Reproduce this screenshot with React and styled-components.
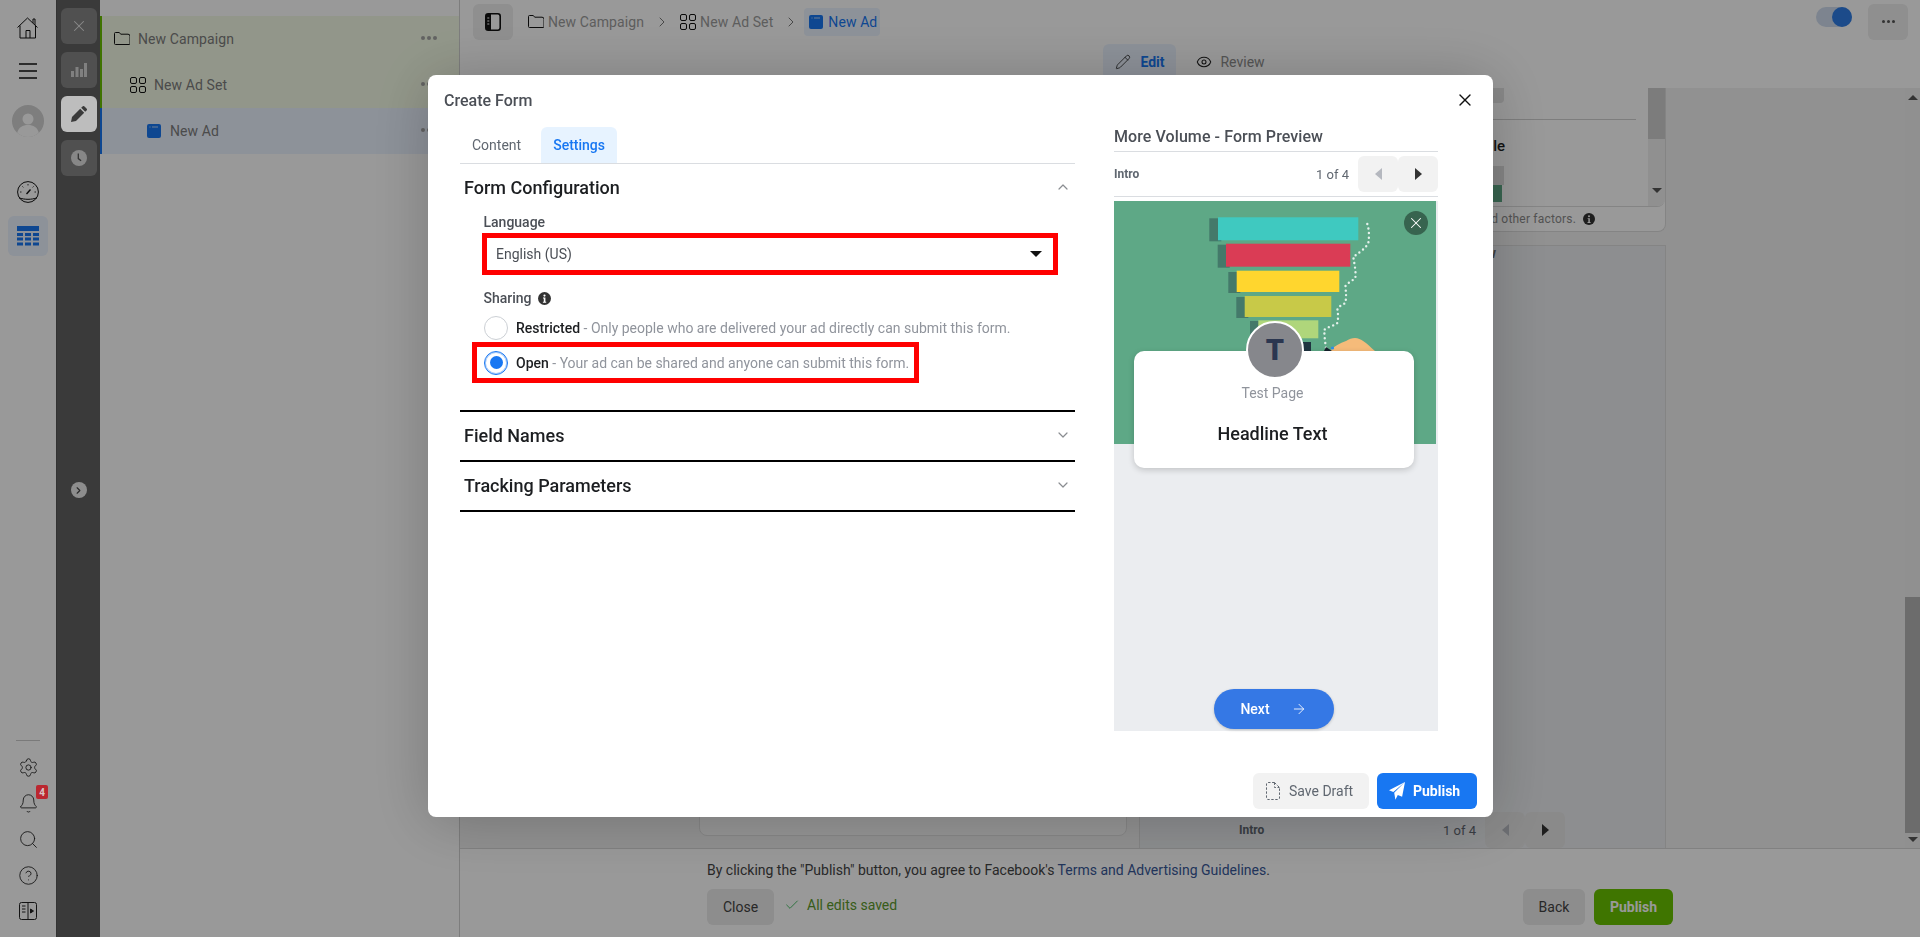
import React from "react";
import styled, { createGlobalStyle } from "styled-components";
import { Settings, Bell, Search, CircleHelp, X, ChevronDown, ChevronUp, ChevronRight, Pencil, Eye, ArrowRight, Check } from "lucide-react";

const Global = createGlobalStyle`
  html, body { margin: 0; padding: 0; height: 100%; overflow: hidden; background: #fff; }
  body { font-family: Roboto, "Liberation Sans", sans-serif; font-size: 14px; color: #1c1e21; }
  * { box-sizing: border-box; }
  #root { height: 100%; }
`;

const Shell = styled.div`display: flex; width: 1920px; height: 937px; overflow: hidden;`;

/* Left rail */
const Rail = styled.nav`
  width: 56px; flex: none; display: flex; flex-direction: column; align-items: center; background: #fff; padding: 17px 0 8px;
`;
const RailIcon = styled.div`
  width: 40px; height: ${p => p.$h || 36}px; margin-top: ${p => p.$mt || 0}px; display: flex; align-items: center; justify-content: center;
  border-radius: 6px; flex: none; position: relative; color: #111;
  background: ${p => (p.$active ? "#ebf3ff" : "transparent")};
`;
const RailSpacer = styled.div`flex: 1;`;
const RailRule = styled.div`width: 24px; height: 1px; background: #ccc; margin-bottom: 8px;`;
const Badge = styled.span`
  position: absolute; top: 0; right: 0; width: 12px; height: 14px; border-radius: 2px; background: #bb2730; color: #d8c4c6;
  font-size: 10px; font-weight: 700; display: flex; align-items: center; justify-content: center; z-index: 11;
`;
const AvatarWrap = styled.div`width: 32px; height: 32px; border-radius: 50%; overflow: hidden; margin-top: 22px; flex: none;`;

/* Dark rail */
const DarkRail = styled.div`
  width: 44px; flex: none; background: #616161; border-left: 1px solid #555; display: flex; flex-direction: column; align-items: center; padding-top: 8px; gap: 8px;
`;
const DarkBtn = styled.button`
  width: 36px; height: 36px; border: 0; border-radius: 6px; padding: 0; display: flex; align-items: center; justify-content: center; flex: none;
  background: ${p => (p.$active ? "#bdbdbd" : "#858585")}; color: ${p => (p.$active ? "#3a3a3a" : "#e6e6e6")};
  ${p => p.$active ? "position: relative; z-index: 11;" : ""}
`;
const Expander = styled.div`
  margin-top: 298px; width: 16px; height: 16px; border-radius: 50%; background: #ececec; color: #444; display: flex; align-items: center; justify-content: center;
`;

/* Tree */
const Tree = styled.aside`width: 360px; flex: none; border-right: 1px solid #d0d0d0; padding-top: 16px; background: #fff;`;
const TreeRow = styled.div`
  height: 46px; display: flex; align-items: center; padding-left: ${p => p.$indent}px; padding-right: 22px; gap: 8px;
  background: ${p => p.$tone === "blue" ? "#ebf3ff" : "#f4fbe6"};
  border-left: 2px solid ${p => p.$tone === "blue" ? "#1877f2" : "#69c000"};
  color: #7d7d7d; font-size: 14px; letter-spacing: .1px;
`;
const RowText = styled.span`flex: 1; margin-left: ${p => p.$ml || 0}px;`;
const Dots = styled.span`
  display: flex; gap: 2px; margin-top: -2px;
  & i { width: ${p => p.$s || 4}px; height: ${p => p.$s || 4}px; border-radius: 50%; background: ${p => p.$c || "#a4a4a4"}; display: block; }
`;

/* Main */
const Main = styled.main`flex: 1; min-width: 0; display: flex; flex-direction: column;`;
const Header = styled.header`height: 88px; flex: none; background: #fff; display: flex; flex-direction: column;`;
const TopBar = styled.div`height: 44px; display: flex; align-items: flex-start; padding: 4px 12px 0 13px;`;
const SquareBtn = styled.button`
  width: 40px; height: 36px; border: 0; border-radius: 6px; background: #eeeeee; padding: 0; display: flex; align-items: center; justify-content: center; flex: none; color: #222;
`;
const Crumbs = styled.div`display: flex; align-items: center; height: 28px; margin: 4px 0 0 15px; color: #9c9c9c; font-size: 14px; letter-spacing: .1px;`;
const Crumb = styled.span`display: flex; align-items: center; gap: 4px;`;
const CrumbSep = styled.span`display: flex; margin: 0 ${p => p.$r}px 0 10px; color: #6e6e6e;`;
const CrumbActive = styled.span`
  display: flex; align-items: center; gap: 5px; height: 28px; width: 76px; padding: 0 0 0 5px; border-radius: 4px; background: #ebf3ff; color: #1877f2;
`;
const TopSpacer = styled.div`flex: 1;`;
const Toggle = styled.div`width: 36px; height: 20px; border-radius: 10px; background: #d0dcee; margin: 3px 16px 0 0; display: flex; justify-content: flex-end;`;
const ToggleKnob = styled.div`width: 20px; height: 20px; border-radius: 50%; background: #2f7ee6;`;
const ViewTabs = styled.div`display: flex; justify-content: center; gap: 8px; height: 36px;`;
const ViewTab = styled.div`
  display: flex; align-items: center; gap: ${p => p.$active ? 9 : 8}px; padding: 0 12px; border-radius: 6px; font-size: 14px;
  background: ${p => p.$active ? "#ebf3ff" : "transparent"};
  color: ${p => p.$active ? "#1877f2" : "#8d8d8d"}; font-weight: ${p => p.$active ? 700 : 400};
`;

const Content = styled.div`flex: 1; min-height: 0; display: flex; background: #f2f2f2;`;
const EditorCol = styled.div`width: 679px; flex: none; padding: 0 12px 12px 239px; display: flex; align-items: flex-end;`;
const EditorCard = styled.div`width: 428px; height: 300px; background: #fafafa; border: 1px solid #e0e0e0; border-radius: 8px;`;
const PreviewCol = styled.div`width: 527px; flex: none; display: flex; flex-direction: column; gap: 13px;`;
const TopCard = styled.section`height: 144px; flex: none; background: #fff; border: solid #dcdcdc; border-width: 0 1px 1px 1px; border-radius: 0 0 8px 8px; display: flex; flex-direction: column;`;
const TopPane = styled.div`height: 119px; flex: none; display: flex; border-bottom: 1px solid #ddd; border-radius: 0 0 8px 8px; overflow: hidden;`;
const TopPaneBody = styled.div`flex: 1; min-width: 0; display: flex; flex-direction: column; align-items: flex-start;`;
const MiniChip = styled.div`width: ${p => p.$w}px; height: ${p => p.$h}px; margin-left: 139px; background: ${p => p.$c}; border-radius: ${p => p.$r || 0};`;
const PaneRule = styled.div`width: 496px; height: 1px; background: #d0d0d0; margin: 16px 0 0 0;`;
const PaneTitle = styled.div`width: 226px; margin: 16px 0 10px 139px; text-align: right; font-size: 15px; font-weight: 500; color: #1c1e21; line-height: 20px;`;
const Scrollbar = styled.div`width: ${p => p.$w}px; flex: none; background: #f1f1f1; display: flex; flex-direction: column; align-items: center;`;
const Thumb = styled.div`width: 100%; height: ${p => p.$h}px; background: ${p => p.$c || "#cfcfcf"};`;
const BarGap = styled.div`flex: 1;`;
const ArrowDown = styled.div`width: 0; height: 0; border: 5px solid transparent; border-bottom: 0; border-top: 5px solid #555; margin: ${p => p.$m || "0 0 12px"};`;
const ArrowUp = styled.div`width: 0; height: 0; border: 5px solid transparent; border-top: 0; border-bottom: 5px solid #555; margin: ${p => p.$m || "0"};`;
const Estimate = styled.div`flex: 1; display: flex; align-items: center; justify-content: flex-end; padding-right: 70px; gap: 7px; white-space: nowrap; font-size: 12px; letter-spacing: .2px; overflow: hidden; color: #8a8a8a;`;
const PreviewCard = styled.section`flex: 1; min-height: 0; background: #ebedf0; border: 1px solid #dcdcdc; border-bottom: 0; display: flex; flex-direction: column;`;
const PreviewHeading = styled.div`padding-left: 306px; font-size: 14px; font-weight: 700; color: #6b6b6b; line-height: 14px;`;
const CardSpacer = styled.div`flex: 1;`;
const PagerStrip = styled.div`display: flex; align-items: center; height: 36px; padding: 0 100px 0 99px;`;
const IntroLabel = styled.span`font-size: 12px; font-weight: 700; color: #606770; line-height: 16px;`;
const PageCount = styled.span`margin-left: auto; margin-right: 9px; font-size: 13px; color: #606770;`;
const PagerBtn = styled.button`
  width: 40px; height: 36px; border: 0; padding: 0; background: ${p => p.$bg || "#f2f2f2"}; border-radius: 6px; display: flex; align-items: center; justify-content: center; flex: none;
`;
const CaretTri = styled.span`
  width: 0; height: 0; border-top: 6px solid transparent; border-bottom: 6px solid transparent;
  ${p => p.$dir === "left" ? `border-right: 7px solid ${p.$c};` : `border-left: 7px solid ${p.$c};`}
`;
const GreySide = styled.div`flex: 1; min-width: 0;`;

const Footer = styled.footer`height: 89px; flex: none; background: #fff; border-top: 1px solid #d8d8d8; padding: 12px 247px 0; display: flex; flex-direction: column;`;
const Terms = styled.div`font-size: 14px; line-height: 18px; color: #444; white-space: nowrap;`;
const TermsLink = styled.span`color: #385898;`;
const FooterRow = styled.div`display: flex; align-items: center; margin-top: 10px;`;
const FooterBtn = styled.button`
  height: 36px; padding: 0; border: 0; border-radius: 6px; font: ${p => p.$bold ? 700 : 400} 14px Roboto, sans-serif; margin-left: ${p => p.$ml || 0}px;
  background: ${p => p.$bg || "#ebebeb"}; color: ${p => p.$fg || "#444"}; width: ${p => p.$w}px;
`;
const Saved = styled.span`display: flex; align-items: center; gap: 7px; margin-left: 10px; color: #5c9a2c; font-size: 14px; margin-top: -4px;`;
const FooterSpacer = styled.div`flex: 1;`;

/* Modal */
const Overlay = styled.div`position: fixed; inset: 0; z-index: 10; background: rgba(0,0,0,.4); padding: 75px 0 0 428px;`;
const Modal = styled.div`
  width: 1065px; height: 742px; background: #fff; border-radius: 8px; box-shadow: 0 4px 60px rgba(0,0,0,.22); display: flex; flex-direction: column; position: relative;
`;
const ModalHead = styled.div`height: 52px; flex: none; display: flex; align-items: center; padding: 0 16px; justify-content: space-between;`;
const ModalTitle = styled.h2`margin: 0; font-size: 16px; font-weight: 500; color: #4b4f56; line-height: 20px;`;
const CloseBtn = styled.button`background: none; border: 0; padding: 0; margin: -2px 2px 0 0; display: flex; color: #111;`;
const ModalBody = styled.div`flex: 1; min-height: 0; display: flex; padding-left: 32px; gap: 39px;`;
const LeftCol = styled.div`width: 615px; flex: none;`;
const Tabs = styled.div`display: flex; gap: 8px; height: 37px; border-bottom: 1px solid #dadde1;`;
const Tab = styled.div`
  height: 36px; padding: 0 12px; border-radius: 6px 6px 0 0; display: flex; align-items: center; font-size: 14px; font-weight: ${p => p.$active ? 500 : 400};
  background: ${p => p.$active ? "#e7f3ff" : "transparent"}; color: ${p => p.$active ? "#1877f2" : "#606770"};
`;
const Section = styled.div`border-bottom: ${p => p.$last ? "2px solid #000" : "0"}; border-top: ${p => p.$top ? "2px solid #000" : "0"};`;
const SectionHead = styled.div`height: 48px; padding: 0 4px 2px; display: flex; align-items: center; justify-content: space-between; font-size: 18px; font-weight: 500; color: #1c1e21;`;
const Chevron = styled.span`display: flex; color: #8a8d91;`;
const SectionBody = styled.div`padding-bottom: 27px;`;
const FieldLabel = styled.div`display: flex; align-items: center; gap: 6px; margin: ${p => p.$mt || 0}px 0 0 23.5px; font-size: 14px; font-weight: 500; color: #4b4f56; line-height: 20px;`;
const SelectBox = styled.div`
  margin: 1px 0 0 22px; width: 576px; height: 42px; border: 5px solid #f00; display: flex; align-items: center; justify-content: space-between; padding: 0 11px 0 9px; font-size: 14px; color: #4b4f56;
`;
const SelectCaret = styled.span`width: 0; height: 0; border: 6px solid transparent; border-top: 6px solid #111; border-bottom: 0;`;
const RadioRow = styled.div`display: flex; align-items: center; gap: 8px; height: 24px; margin: 8px 0 2px 24px; font-size: 14px; color: #90949c; white-space: nowrap;`;
const RadioRowFramed = styled.div`
  display: flex; align-items: center; gap: 8px; width: 447px; height: 41px; margin-left: 12px; border: 5px solid #f00; padding-left: 7px; font-size: 14px; color: #90949c; white-space: nowrap;
`;
const Radio = styled.span`
  width: 24px; height: 24px; border-radius: 50%; flex: none; display: flex; align-items: center; justify-content: center; background: #fff;
  border: 1px solid ${p => p.$on ? "#1877f2" : "#ccd0d5"}; box-shadow: ${p => p.$on ? "inset 0 0 0 1px #a9ccf9" : "none"};
  &::after { content: ""; width: 13px; height: 13px; border-radius: 50%; background: ${p => p.$on ? "#1877f2" : "transparent"}; }
`;
const RadioName = styled.b`font-weight: 500; color: #1c1e21;`;

const RightCol = styled.div`width: 324px; flex: none; display: flex; flex-direction: column;`;
const PreviewTitle = styled.div`height: 25px; line-height: 20px; border-bottom: 1px solid #dadde1; font-size: 16px; letter-spacing: .08px; font-weight: 500; color: #4b4f56;`;
const PagerRow = styled.div`height: 45px; flex: none; border-bottom: 1px solid #dadde1; display: flex; align-items: center;`;
const Phone = styled.div`margin-top: 4px; height: 530px; background: #ebedf0; display: flex; flex-direction: column; align-items: flex-start; position: relative;`;
const Artwork = styled.svg`position: absolute; left: 0; top: 0; display: block;`;
const ImgClose = styled.span`
  position: absolute; top: 10px; right: 10px; width: 24px; height: 24px; border-radius: 50%; background: #37644f; color: #fff; display: flex; align-items: center; justify-content: center;
`;
const LeadCard = styled.div`
  position: relative; margin: 150px 0 0 20px; width: 280px; height: 117px; padding-right: 3px; background: #fff; border-radius: 10px; box-shadow: 0 2px 6px rgba(0,0,0,.18);
  display: flex; flex-direction: column; align-items: center;
`;
const PageAvatar = styled.div`
  position: absolute; left: 112px; top: -30px; width: 58px; height: 58px; border-radius: 50%; background: #86878c; border: 2px solid #fff; color: #2b3650;
  font-size: 29px; font-weight: 900; display: flex; align-items: center; justify-content: center;
`;
const PageName = styled.div`margin-top: 32px; font-size: 14px; color: #90949c; line-height: 20px;`;
const Headline = styled.div`margin-top: 21px; font-size: 18px; font-weight: 500; color: #1c1e21; line-height: 20px;`;
const NextBtn = styled.div`
  position: absolute; bottom: 2px; left: 100px; width: 120px; height: 40px; border-radius: 20px; background: #3578e5; color: #fff; font-weight: 500; font-size: 14px;
  display: flex; align-items: center; justify-content: center; gap: 21px; padding-right: 1px; box-shadow: 0 1px 3px rgba(0,0,0,.2);
`;
const ModalFoot = styled.div`height: 44px; flex: none; display: flex; justify-content: flex-end; gap: 8px; padding-right: 16px;`;
const DraftBtn = styled.button`
  width: 116px; height: 36px; border: 0; border-radius: 6px; background: #f2f2f2; color: #606770; font: 400 14px Roboto, sans-serif; display: flex; align-items: center; gap: 9px; padding: 0 0 0 13px;
`;
const SendBtn = styled.button`
  width: 100px; height: 36px; border: 0; border-radius: 6px; background: #1877f2; color: #fff; font: 700 14px Roboto, sans-serif; display: flex; align-items: center; gap: 8px; padding: 0 0 0 12px;
`;

/* drawn icons */
const FolderIcon = () => (
  <svg width="16" height="14" viewBox="0 0 16 14" fill="none" stroke="#111" strokeWidth="1"><path d="M.5 1.5a1 1 0 0 1 1-1h3.8l1.4 1.7h7.3a2 2 0 0 1 2 2v7.3a1 1 0 0 1-1 1H1.5a1 1 0 0 1-1-1z" /></svg>
);
const AdSetIcon = () => (
  <svg width="16" height="16" viewBox="0 0 16 16" fill="none" stroke="#111" strokeWidth="1">
    <rect x=".5" y=".5" width="6" height="6" rx="1.5" /><rect x="9.5" y=".5" width="6" height="6" rx="1.5" />
    <rect x=".5" y="9.5" width="6" height="6" rx="1.5" /><rect x="9.5" y="9.5" width="6" height="6" rx="1.5" />
  </svg>
);
const AdIcon = () => (
  <svg width="14" height="14" viewBox="0 0 14 14"><rect width="14" height="14" rx="2" fill="#1877f2" /><path d="M2.5 3h1M5 3h6" stroke="#fff" strokeWidth=".7" /></svg>
);
const HomeIcon = () => (
  <svg width="24" height="24" viewBox="0 0 24 24" fill="none" stroke="#111" strokeWidth="1"><path d="M1.5 11.5 11.5 2l10 9.5M4 9.5V22h15.5V9.5M10 22v-7.5h4V22M17 7V3h2v6" /></svg>
);
const MenuIcon = () => (
  <svg width="18" height="16" viewBox="0 0 18 16" stroke="#111" strokeWidth="1.6"><path d="M0 1h18M0 8h18M0 15h18" /></svg>
);
const AvatarIcon = () => (
  <svg width="32" height="32" viewBox="0 0 32 32"><rect width="32" height="32" fill="#d2d2d2" /><circle cx="16" cy="14" r="5.5" fill="#fff" /><path d="M5 29c1-7 6-9 11-9s10 2 11 9v3H5z" fill="#fff" /></svg>
);
const GaugeIcon = () => (
  <svg width="22" height="22" viewBox="0 0 22 22" fill="none" stroke="#111" strokeWidth="1">
    <circle cx="11" cy="11" r="10.4" /><path d="M2 16.8c5.5 2 12.5 2 18 0" /><path d="m9.5 13 4-4.5" strokeWidth="1.4" />
    <path d="M11 3.2v1.2M5.5 5.5l.8.8M3.2 11h1.2M16.5 5.5l-.8.8M18.8 11h-1.2" strokeWidth="1" />
  </svg>
);
const TableIcon = () => (
  <svg width="22" height="20" viewBox="0 0 22 20" fill="#1877f2">
    <rect width="22" height="5" />
    {[7, 11.5, 16.5].map(y => [0, 8, 16].map(x => <rect key={x + "-" + y} x={x} y={y} width="6" height="3" />))}
  </svg>
);
const PanelIcon = () => (
  <svg width="18" height="18" viewBox="0 0 18 18" fill="none" stroke="#222" strokeWidth="1"><rect x=".5" y=".5" width="17" height="17" rx="2" /><path d="M9 .5v17M3 4h3.5M3 7h3.5M3 10h3.5" /><path d="M11.5 7v4l3-2z" fill="#222" /></svg>
);
const BarsIcon = () => (
  <svg width="16" height="14" viewBox="0 0 16 14" fill="#d5d5d5"><rect x="0" y="8" width="3" height="6" /><rect x="4.5" y="4" width="3" height="10" /><rect x="9" y="6" width="3" height="8" /><rect x="13" y="0" width="3" height="14" /></svg>
);
const SolidPencil = () => (
  <svg width="16" height="16" viewBox="0 0 16 16" fill="#3a3a3a"><path d="M0 16l1-5 8.2-8.2 4 4L5 15zM10.2 1.8 11.5.5a1.4 1.4 0 0 1 2 0l2 2a1.4 1.4 0 0 1 0 2l-1.3 1.3z" /></svg>
);
const ClockIcon = () => (
  <svg width="16" height="16" viewBox="0 0 16 16"><circle cx="8" cy="8" r="8" fill="#e2e2e2" /><path d="M7.3 3.6v5l2.8 2.2" fill="none" stroke="#555" strokeWidth="1.3" /></svg>
);
const SidebarIcon = () => (
  <svg width="16" height="18" viewBox="0 0 16 18"><rect x=".8" y=".8" width="14.4" height="16.4" rx="2.4" fill="#fff" stroke="#111" strokeWidth="1.6" /><rect x="1" y="1" width="5" height="16" fill="#111" /><path d="M2.3 5h2M2.3 8h2M2.3 11h2" stroke="#fff" /></svg>
);
const FileDash = () => (
  <svg width="14" height="18" viewBox="0 0 14 18" fill="none" stroke="#606770" strokeWidth="1" strokeDasharray="2.4 1.6"><path d="M8.5.5H2a1.5 1.5 0 0 0-1.5 1.5v14A1.5 1.5 0 0 0 2 17.5h10a1.5 1.5 0 0 0 1.5-1.5V5.5z" /><path d="M8.5 .5v5h5" /></svg>
);
const SendIcon = () => (
  <svg width="16" height="18" viewBox="0 0 16 18" fill="#fff"><path d="M16 0 0 8.2l4.3 1.9zM16 0 5.2 10.8l1.2 7 2.4-4.7 4.3 1.6z" /></svg>
);
const InfoDot = ({ size = 13 }) => (
  <svg width={size} height={size} viewBox="0 0 13 13"><circle cx="6.5" cy="6.5" r="6.5" fill="#333" /><circle cx="6.5" cy="3.6" r="1.1" fill="#fff" /><path d="M5 5.6h2.4v4.2h.8v1H4.9v-1h.9V6.6H5z" fill="#fff" /></svg>
);
const FunnelArt = () => (
  <Artwork width="322" height="243" viewBox="0 0 322 243">
    <rect width="322" height="243" fill="#5ea886" />
    <g fill="#44796a">
      <rect x="95.3" y="17.3" width="12" height="23" /><rect x="103.7" y="43.7" width="12" height="23" /><rect x="114.3" y="71" width="12" height="21" /><rect x="122.3" y="96" width="12" height="21" /><rect x="136" y="120" width="12" height="18" />
    </g>
    <rect x="104" y="16.3" width="140.3" height="23" fill="#3fc9c0" />
    <rect x="112" y="42.7" width="124.3" height="23" fill="#da3c55" />
    <rect x="122.7" y="69.7" width="102.6" height="21.3" fill="#ffd62e" />
    <rect x="130.7" y="95" width="86.6" height="21" fill="#c8c948" />
    <rect x="144.3" y="119.3" width="60" height="18" fill="#afd67b" />
    <rect x="189" y="141" width="8" height="9" fill="#1f3440" />
    <path d="M253.3 23c2 6 2 13 1 19-3 6-10 10-15 14 1 7 3 15 2 21-3 3-10 6-10 9 1 6 1 11 0 16-3 2-7 3-8 7 1 4 1 9 0 13-3 3-11 4-13 7 0 6 1 14 2 20" fill="none" stroke="#e6f1ec" strokeWidth="2.4" strokeLinecap="round" strokeDasharray="0 4.6" />
    <path d="M216 150c4-5 10-8 16-10 3-2 6-3 9-3 6 0 11 5 20 13z" fill="#f5bb7a" />
    <path d="M212 146l6 4h-8z" fill="#14202a" /><circle cx="218.5" cy="147" r="1.6" fill="#2d8fe8" />
  </Artwork>
);

export default function App() {
  return (
    <>
      <Global />
      <Shell>
        <Rail>
          <RailIcon $h="22"><HomeIcon /></RailIcon>
          <RailIcon $mt="20" $h="24"><MenuIcon /></RailIcon>
          <AvatarWrap><AvatarIcon /></AvatarWrap>
          <RailIcon $mt="43" $h="24"><GaugeIcon /></RailIcon>
          <RailIcon $mt="12" $h="40" $active><TableIcon /></RailIcon>
          <RailSpacer />
          <RailRule />
          <RailIcon><Settings size={21} strokeWidth={1} color="#222" /></RailIcon>
          <RailIcon>
            <Bell size={21} strokeWidth={1} color="#222" />
            <Badge>4</Badge>
          </RailIcon>
          <RailIcon><Search size={21} strokeWidth={1} color="#222" /></RailIcon>
          <RailIcon><CircleHelp size={21} strokeWidth={1} color="#222" /></RailIcon>
          <RailIcon><PanelIcon /></RailIcon>
        </Rail>

        <DarkRail>
          <DarkBtn><X size={18} strokeWidth={1.4} /></DarkBtn>
          <DarkBtn><BarsIcon /></DarkBtn>
          <DarkBtn $active><SolidPencil /></DarkBtn>
          <DarkBtn><ClockIcon /></DarkBtn>
          <Expander><ChevronRight size={11} strokeWidth={2.5} /></Expander>
        </DarkRail>

        <Tree>
          <TreeRow $indent="12"><FolderIcon /><RowText>New Campaign</RowText><Dots><i /><i /><i /></Dots></TreeRow>
          <TreeRow $indent="28"><AdSetIcon /><RowText>New Ad Set</RowText><Dots><i /><i /><i /></Dots></TreeRow>
          <TreeRow $tone="blue" $indent="45"><AdIcon /><RowText $ml="1">New Ad</RowText><Dots><i /><i /><i /></Dots></TreeRow>
        </Tree>

        <Main>
          <Header>
            <TopBar>
              <SquareBtn><SidebarIcon /></SquareBtn>
              <Crumbs>
                <Crumb><FolderIcon />New Campaign</Crumb>
                <CrumbSep $r={10}><ChevronRight size={16} strokeWidth={1.4} /></CrumbSep>
                <Crumb><AdSetIcon />New Ad Set</Crumb>
                <CrumbSep $r={5}><ChevronRight size={16} strokeWidth={1.4} /></CrumbSep>
                <CrumbActive><AdIcon />New Ad</CrumbActive>
              </Crumbs>
              <TopSpacer />
              <Toggle><ToggleKnob /></Toggle>
              <SquareBtn><Dots $c="#555" $s={3}><i /><i /><i /></Dots></SquareBtn>
            </TopBar>
            <ViewTabs>
              <ViewTab $active><Pencil size={16} strokeWidth={1.2} color="#222" />Edit</ViewTab>
              <ViewTab><Eye size={16} strokeWidth={1.6} color="#222" />Review</ViewTab>
            </ViewTabs>
          </Header>

          <Content>
            <EditorCol><EditorCard /></EditorCol>
            <PreviewCol>
              <TopCard>
                <TopPane>
                  <TopPaneBody>
                    <MiniChip $w={225} $h={15} $c="#e4e4e4" $r="0 0 4px 0" />
                    <PaneRule />
                    <PaneTitle>Example</PaneTitle>
                    <MiniChip $w={225} $h={19} $c="#dedede" />
                    <MiniChip $w={223} $h={17} $c="#5ea886" />
                  </TopPaneBody>
                  <Scrollbar $w={17}>
                    <Thumb $h={51} />
                    <BarGap />
                    <ArrowDown $m="0 0 13px" />
                  </Scrollbar>
                </TopPane>
                <Estimate>Estimates may vary based on your budget and other factors.<InfoDot size={12} /></Estimate>
              </TopCard>
              <PreviewCard>
                <PreviewHeading>Preview</PreviewHeading>
                <CardSpacer />
                <PagerStrip>
                  <IntroLabel>Intro</IntroLabel>
                  <PageCount>1 of 4</PageCount>
                  <PagerBtn $bg="#e6e6e6"><CaretTri $dir="left" $c="#b5b8bf" /></PagerBtn>
                  <PagerBtn $bg="#e6e6e6"><CaretTri $c="#333" /></PagerBtn>
                </PagerStrip>
              </PreviewCard>
            </PreviewCol>
            <GreySide />
            <Scrollbar $w={15}>
              <ArrowUp $m="7px 0 0" />
              <BarGap />
              <Thumb $h={236} $c="#b5b5b5" />
              <ArrowDown $m="4px 0 6px" />
            </Scrollbar>
          </Content>

          <Footer>
            <Terms>By clicking the "Publish" button, you agree to Facebook's <TermsLink>Terms and Advertising Guidelines</TermsLink>.</Terms>
            <FooterRow>
              <FooterBtn $w={67}>Close</FooterBtn>
              <Saved><Check size={16} strokeWidth={1.4} color="#45bd62" />All edits saved</Saved>
              <FooterSpacer />
              <FooterBtn $w={62}>Back</FooterBtn>
              <FooterBtn $w={79} $ml={9} $bold $bg="#69c300" $fg="#fff">Publish</FooterBtn>
            </FooterRow>
          </Footer>
        </Main>
      </Shell>

      <Overlay>
        <Modal>
          <ModalHead>
            <ModalTitle>Create Form</ModalTitle>
            <CloseBtn><X size={20} strokeWidth={1.6} /></CloseBtn>
          </ModalHead>
          <ModalBody>
            <LeftCol>
              <Tabs>
                <Tab>Content</Tab>
                <Tab $active>Settings</Tab>
              </Tabs>
              <Section>
                <SectionHead>Form Configuration<Chevron><ChevronUp size={16} strokeWidth={1.8} /></Chevron></SectionHead>
                <SectionBody>
                  <FieldLabel>Language</FieldLabel>
                  <SelectBox>English (US)<SelectCaret /></SelectBox>
                  <FieldLabel $mt={13}>Sharing<InfoDot /></FieldLabel>
                  <RadioRow><Radio /><span><RadioName>Restricted</RadioName> - Only people who are delivered your ad directly can submit this form.</span></RadioRow>
                  <RadioRowFramed><Radio $on /><span><RadioName>Open</RadioName> - Your ad can be shared and anyone can submit this form.</span></RadioRowFramed>
                </SectionBody>
              </Section>
              <Section $top>
                <SectionHead>Field Names<Chevron><ChevronDown size={16} strokeWidth={1.8} /></Chevron></SectionHead>
              </Section>
              <Section $top $last>
                <SectionHead>Tracking Parameters<Chevron><ChevronDown size={16} strokeWidth={1.8} /></Chevron></SectionHead>
              </Section>
            </LeftCol>
            <RightCol>
              <PreviewTitle>More Volume - Form Preview</PreviewTitle>
              <PagerRow>
                <IntroLabel>Intro</IntroLabel>
                <PageCount>1 of 4</PageCount>
                <PagerBtn><CaretTri $dir="left" $c="#b5b8bf" /></PagerBtn>
                <PagerBtn><CaretTri $c="#333" /></PagerBtn>
              </PagerRow>
              <Phone>
                <FunnelArt />
                <ImgClose><X size={18} strokeWidth={1.4} /></ImgClose>
                <LeadCard>
                  <PageAvatar>T</PageAvatar>
                  <PageName>Test Page</PageName>
                  <Headline>Headline Text</Headline>
                </LeadCard>
                <NextBtn>Next<ArrowRight size={16} strokeWidth={1.3} /></NextBtn>
              </Phone>
            </RightCol>
          </ModalBody>
          <ModalFoot>
            <DraftBtn><FileDash />Save Draft</DraftBtn>
            <SendBtn><SendIcon />Publish</SendBtn>
          </ModalFoot>
        </Modal>
      </Overlay>
    </>
  );
}
